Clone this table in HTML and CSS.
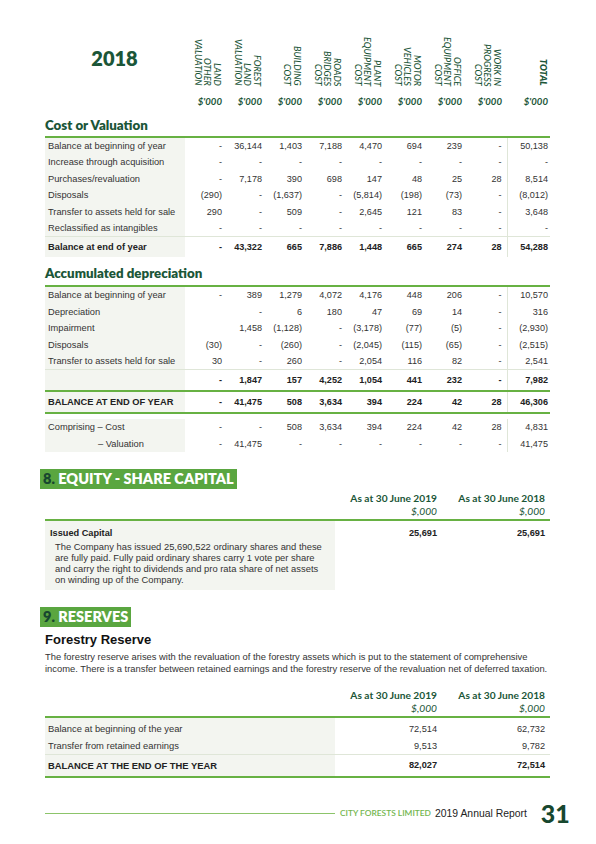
FILE: index.html
```html
<!DOCTYPE html>
<html lang="en">
<head>
  <meta charset="UTF-8">
  <title>Property, plant and equipment</title>
  <link rel="stylesheet" href="styles.css">
</head>
<body>
<div class="page">

  <!-- column headers -->
  <table class="grid head">
    <colgroup>
      <col class="c-label"><col class="c-first">
      <col class="c-n"><col class="c-n"><col class="c-n"><col class="c-n"><col class="c-n"><col class="c-n">
      <col class="c-last"><col class="c-tot">
    </colgroup>
    <tr class="titles">
      <td class="year"><div class="vbox center">2018</div></td>
      <td><div class="vbox"><span class="vert">LAND<br>OTHER<br>VALUATION</span></div></td>
      <td><div class="vbox"><span class="vert">FOREST<br>LAND<br>VALUATION</span></div></td>
      <td><div class="vbox"><span class="vert">BUILDING<br>COST</span></div></td>
      <td><div class="vbox"><span class="vert">ROADS<br>BRIDGES<br>COST</span></div></td>
      <td><div class="vbox"><span class="vert">PLANT<br>EQUIPMENT<br>COST</span></div></td>
      <td><div class="vbox"><span class="vert">MOTOR<br>VEHICLES<br>COST</span></div></td>
      <td><div class="vbox"><span class="vert">OFFICE<br>EQUIPMENT<br>COST</span></div></td>
      <td class="c8"><div class="vbox"><span class="vert">WORK IN<br>PROGRESS<br>COST</span></div></td>
      <td class="tot"><div class="vbox"><span class="vert bold">TOTAL</span></div></td>
    </tr>
    <tr class="units">
      <td></td>
      <td>$'000</td><td>$'000</td><td>$'000</td><td>$'000</td><td>$'000</td>
      <td>$'000</td><td>$'000</td><td class="c8">$'000</td><td class="tot">$'000</td>
    </tr>
  </table>

  <h3 class="sub">Cost or Valuation</h3>
  <table class="grid">
    <colgroup>
      <col class="c-label"><col class="c-first">
      <col class="c-n"><col class="c-n"><col class="c-n"><col class="c-n"><col class="c-n"><col class="c-n">
      <col class="c-last"><col class="c-tot">
    </colgroup>
    <tr><td class="lbl">Balance at beginning of year</td><td>-</td><td>36,144</td><td>1,403</td><td>7,188</td><td>4,470</td><td>694</td><td>239</td><td class="c8">-</td><td class="tot">50,138</td></tr>
    <tr><td class="lbl">Increase through acquisition</td><td>-</td><td>-</td><td>-</td><td>-</td><td>-</td><td>-</td><td>-</td><td class="c8">-</td><td class="tot">-</td></tr>
    <tr><td class="lbl">Purchases/revaluation</td><td>-</td><td>7,178</td><td>390</td><td>698</td><td>147</td><td>48</td><td>25</td><td class="c8">28</td><td class="tot">8,514</td></tr>
    <tr><td class="lbl">Disposals</td><td>(290)</td><td>-</td><td>(1,637)</td><td>-</td><td>(5,814)</td><td>(198)</td><td>(73)</td><td class="c8">-</td><td class="tot">(8,012)</td></tr>
    <tr><td class="lbl">Transfer to assets held for sale</td><td>290</td><td>-</td><td>509</td><td>-</td><td>2,645</td><td>121</td><td>83</td><td class="c8">-</td><td class="tot">3,648</td></tr>
    <tr><td class="lbl">Reclassified as intangibles</td><td>-</td><td>-</td><td>-</td><td>-</td><td>-</td><td>-</td><td>-</td><td class="c8">-</td><td class="tot">-</td></tr>
    <tr class="sum"><td class="lbl">Balance at end of year</td><td>-</td><td>43,322</td><td>665</td><td>7,886</td><td>1,448</td><td>665</td><td>274</td><td class="c8">28</td><td class="tot">54,288</td></tr>
  </table>

  <h3 class="sub sub-second">Accumulated depreciation</h3>
  <table class="grid">
    <colgroup>
      <col class="c-label"><col class="c-first">
      <col class="c-n"><col class="c-n"><col class="c-n"><col class="c-n"><col class="c-n"><col class="c-n">
      <col class="c-last"><col class="c-tot">
    </colgroup>
    <tr><td class="lbl">Balance at beginning of year</td><td>-</td><td>389</td><td>1,279</td><td>4,072</td><td>4,176</td><td>448</td><td>206</td><td class="c8">-</td><td class="tot">10,570</td></tr>
    <tr><td class="lbl">Depreciation</td><td></td><td>-</td><td>6</td><td>180</td><td>47</td><td>69</td><td>14</td><td class="c8">-</td><td class="tot">316</td></tr>
    <tr><td class="lbl">Impairment</td><td></td><td>1,458</td><td>(1,128)</td><td>-</td><td>(3,178)</td><td>(77)</td><td>(5)</td><td class="c8">-</td><td class="tot">(2,930)</td></tr>
    <tr><td class="lbl">Disposals</td><td>(30)</td><td>-</td><td>(260)</td><td>-</td><td>(2,045)</td><td>(115)</td><td>(65)</td><td class="c8">-</td><td class="tot">(2,515)</td></tr>
    <tr><td class="lbl">Transfer to assets held for sale</td><td>30</td><td>-</td><td>260</td><td>-</td><td>2,054</td><td>116</td><td>82</td><td class="c8">-</td><td class="tot">2,541</td></tr>
    <tr class="sum"><td class="lbl"></td><td>-</td><td>1,847</td><td>157</td><td>4,252</td><td>1,054</td><td>441</td><td>232</td><td class="c8">-</td><td class="tot">7,982</td></tr>
    <tr class="grand"><td class="lbl">BALANCE AT END OF YEAR</td><td>-</td><td>41,475</td><td>508</td><td>3,634</td><td>394</td><td>224</td><td>42</td><td class="c8">28</td><td class="tot">46,306</td></tr>
  </table>

  <table class="grid split">
    <colgroup>
      <col class="c-label"><col class="c-first">
      <col class="c-n"><col class="c-n"><col class="c-n"><col class="c-n"><col class="c-n"><col class="c-n">
      <col class="c-last"><col class="c-tot">
    </colgroup>
    <tr><td class="lbl">Comprising – Cost</td><td>-</td><td>-</td><td>508</td><td>3,634</td><td>394</td><td>224</td><td>42</td><td class="c8">28</td><td class="tot">4,831</td></tr>
    <tr><td class="lbl indent">– Valuation</td><td>-</td><td>41,475</td><td>-</td><td>-</td><td>-</td><td>-</td><td>-</td><td class="c8">-</td><td class="tot">41,475</td></tr>
  </table>

  <!-- 8. equity -->
  <div class="sec"><span class="num">8.</span> EQUITY - SHARE CAPITAL</div>
  <table class="note">
    <colgroup><col class="n-label"><col class="n-val"><col class="n-val2"></colgroup>
    <tr class="note-head">
      <th></th>
      <th>As at 30 June 2019<br><i>$,000</i></th>
      <th class="last">As at 30 June 2018<br><i>$,000</i></th>
    </tr>
    <tr class="capital">
      <td class="lbl">
        <div class="cap-title">Issued Capital</div>
        <div class="cap-text">The Company has issued 25,690,522 ordinary shares and these<br>are fully paid. Fully paid ordinary shares carry 1 vote per share<br>and carry the right to dividends and pro rata share of net assets<br>on winding up of the Company.</div>
      </td>
      <td class="bold">25,691</td>
      <td class="bold last">25,691</td>
    </tr>
  </table>

  <!-- 9. reserves -->
  <div class="sec sec-second"><span class="num">9.</span> RESERVES</div>
  <div class="reserve-title">Forestry Reserve</div>
  <p class="reserve-text">The forestry reserve arises with the revaluation of the forestry assets which is put to the statement of comprehensive<br>income. There is a transfer between retained earnings and the forestry reserve of the revaluation net of deferred taxation.</p>
  <table class="note">
    <colgroup><col class="n-label"><col class="n-val"><col class="n-val2"></colgroup>
    <tr class="note-head">
      <th></th>
      <th>As at 30 June 2019<br><i>$,000</i></th>
      <th class="last">As at 30 June 2018<br><i>$,000</i></th>
    </tr>
    <tr class="row first"><td class="lbl">Balance at beginning of the year</td><td>72,514</td><td class="last">62,732</td></tr>
    <tr class="row"><td class="lbl">Transfer from retained earnings</td><td>9,513</td><td class="last">9,782</td></tr>
    <tr class="row total"><td class="lbl">BALANCE AT THE END OF THE YEAR</td><td>82,027</td><td class="last">72,514</td></tr>
  </table>

  <div class="footer">
    <span class="foot-line"></span>
    <span class="foot-brand">CITY FORESTS LIMITED</span>
    <span class="foot-report">2019 Annual Report</span>
    <span class="foot-page">31</span>
  </div>
</div>
</body>
</html>
```

FILE: styles.css
```css
body {
  margin: 0;
  background: #fff;
  font-family: "Liberation Sans", Arial, sans-serif;
  color: #333;
}
.page {
  width: 505px;
  padding: 30px 0 0 45px;
}

/* fixed column grid of the asset table */
.grid {
  width: 505px;
  border-collapse: collapse;
  table-layout: fixed;
}
.c-label { width: 140px; }
.c-first { width: 38px; }
.c-n { width: 40px; }
.c-last { width: 44px; }
.c-tot { width: 43px; }

.grid td {
  padding: 0 1px 0 0;
  text-align: right;
  font-size: 9.1px;
  line-height: 16.4px;
  white-space: nowrap;
}
.grid td.lbl {
  text-align: left;
  padding-left: 3px;
  background: #f3f5f0;
  font-size: 9.3px;
}
.grid td.indent {
  padding-left: 53px;
}
.grid td.c8 {
  padding-right: 5px;
}
.grid td.tot {
  padding-right: 2px;
  border-left: 1px solid #dfe6d8;
}
.grid tr.sum td {
  font-weight: bold;
  line-height: 20px;
  border-top: 1px solid #dfe6d8;
  color: #222;
}
.grid tr.grand td {
  font-weight: bold;
  line-height: 20px;
  border-top: 2px solid #67b143;
  border-bottom: 2px solid #67b143;
  color: #222;
}
.split {
  margin-top: 5px;
}

/* header */
.head td {
  border: none;
  color: #1b5638;
  font-family: Lato, "Liberation Sans", sans-serif;
}
.head td.tot {
  border: none;
}
.head tr.titles td {
  padding: 0 1px 2px 0;
  vertical-align: bottom;
}
.head tr.titles td.c8 {
  padding-right: 5px;
}
.head tr.titles td.tot {
  padding-right: 2px;
}
.vbox {
  height: 54px;
  display: flex;
  align-items: flex-end;
  justify-content: flex-end;
}
.vbox.center {
  align-items: center;
  justify-content: center;
  height: 56px;
  font-size: 20px;
  font-weight: 800;
  line-height: 24px;
}
.vert {
  writing-mode: vertical-rl;
  text-align: end;
  font-size: 9px;
  font-style: italic;
  font-weight: 500;
  line-height: 9.6px;
  white-space: nowrap;
}
.vert.bold {
  font-weight: 800;
}
.head tr.units td {
  padding-top: 8px;
  line-height: 12px;
  font-size: 9.6px;
  font-style: italic;
  font-weight: 700;
}

.sub {
  margin: 9px 0 0 0;
  padding-bottom: 3px;
  border-bottom: 2px solid #67b143;
  font-family: Lato, "Liberation Sans", sans-serif;
  font-size: 13.3px;
  font-weight: 800;
  line-height: 16px;
  color: #1b5638;
}
.sub-second {
  margin-top: 8px;
  padding-bottom: 4px;
}

/* numbered section bars */
.sec {
  display: inline-block;
  margin: 17px 0 0 -5px;
  padding: 2px 3px;
  background: #5aa640;
  color: #fff;
  font-family: Lato, "Liberation Sans", sans-serif;
  font-size: 14.5px;
  font-weight: 800;
  line-height: 16px;
}
.sec .num {
  color: #17472f;
}
.sec-second {
  margin-top: 17px;
}

/* note tables */
.note {
  width: 505px;
  border-collapse: collapse;
  table-layout: fixed;
}
.n-label { width: 290px; }
.n-val { width: 103px; }
.n-val2 { width: 112px; }
.note th {
  padding: 3px 1px 1px 0;
  text-align: right;
  vertical-align: bottom;
  border-bottom: 2px solid #67b143;
  font-family: Lato, "Liberation Sans", sans-serif;
  font-size: 10.2px;
  font-weight: 700;
  line-height: 13px;
  color: #1b5638;
  white-space: nowrap;
}
.note th i {
  font-weight: 400;
}
.note td {
  padding: 0 1px 0 0;
  text-align: right;
  vertical-align: top;
  font-size: 9.2px;
  line-height: 16.4px;
  white-space: nowrap;
}
.note .last {
  padding-right: 5px;
}
.note td.lbl {
  text-align: left;
  padding-left: 3px;
  background: #f3f5f0;
  font-size: 9.4px;
}
.note td.bold {
  padding-top: 6px;
  font-weight: bold;
  line-height: 12px;
  color: #222;
}
.capital td.lbl {
  padding: 6px 0 5px 5px;
}
.cap-title {
  font-size: 9.2px;
  font-weight: bold;
  line-height: 12px;
  color: #222;
}
.cap-text {
  margin-top: 2px;
  padding-left: 5px;
  font-size: 9.4px;
  line-height: 11px;
}
.note tr.first td {
  padding-top: 3px;
}
.note tr.total td {
  font-weight: bold;
  line-height: 21px;
  border-top: 1px solid #dfe6d8;
  border-bottom: 2px solid #67b143;
  color: #222;
}

.reserve-title {
  margin-top: 6px;
  font-size: 13px;
  font-weight: bold;
  line-height: 14px;
  color: #111;
}
.reserve-text {
  margin: 4px 0 0 0;
  font-size: 9.4px;
  line-height: 12px;
  color: #333;
  white-space: nowrap;
}
.reserve-text + .note {
  margin-top: 11px;
}

/* footer */
.footer {
  display: flex;
  align-items: center;
  margin-top: 20px;
  white-space: nowrap;
}
.footer span {
  flex: none;
}
.foot-line {
  width: 290px;
  height: 1px;
  background: #8cc46a;
}
.foot-brand {
  margin-left: 5px;
  font-family: Lato, "Liberation Sans", sans-serif;
  font-size: 8.4px;
  font-weight: 600;
  color: #72b64e;
}
.foot-report {
  margin-left: 4px;
  font-size: 10.4px;
  color: #222;
}
.foot-page {
  margin-left: 14px;
  font-family: Lato, "Liberation Sans", sans-serif;
  font-size: 25px;
  font-weight: 900;
  color: #17472f;
}
```
